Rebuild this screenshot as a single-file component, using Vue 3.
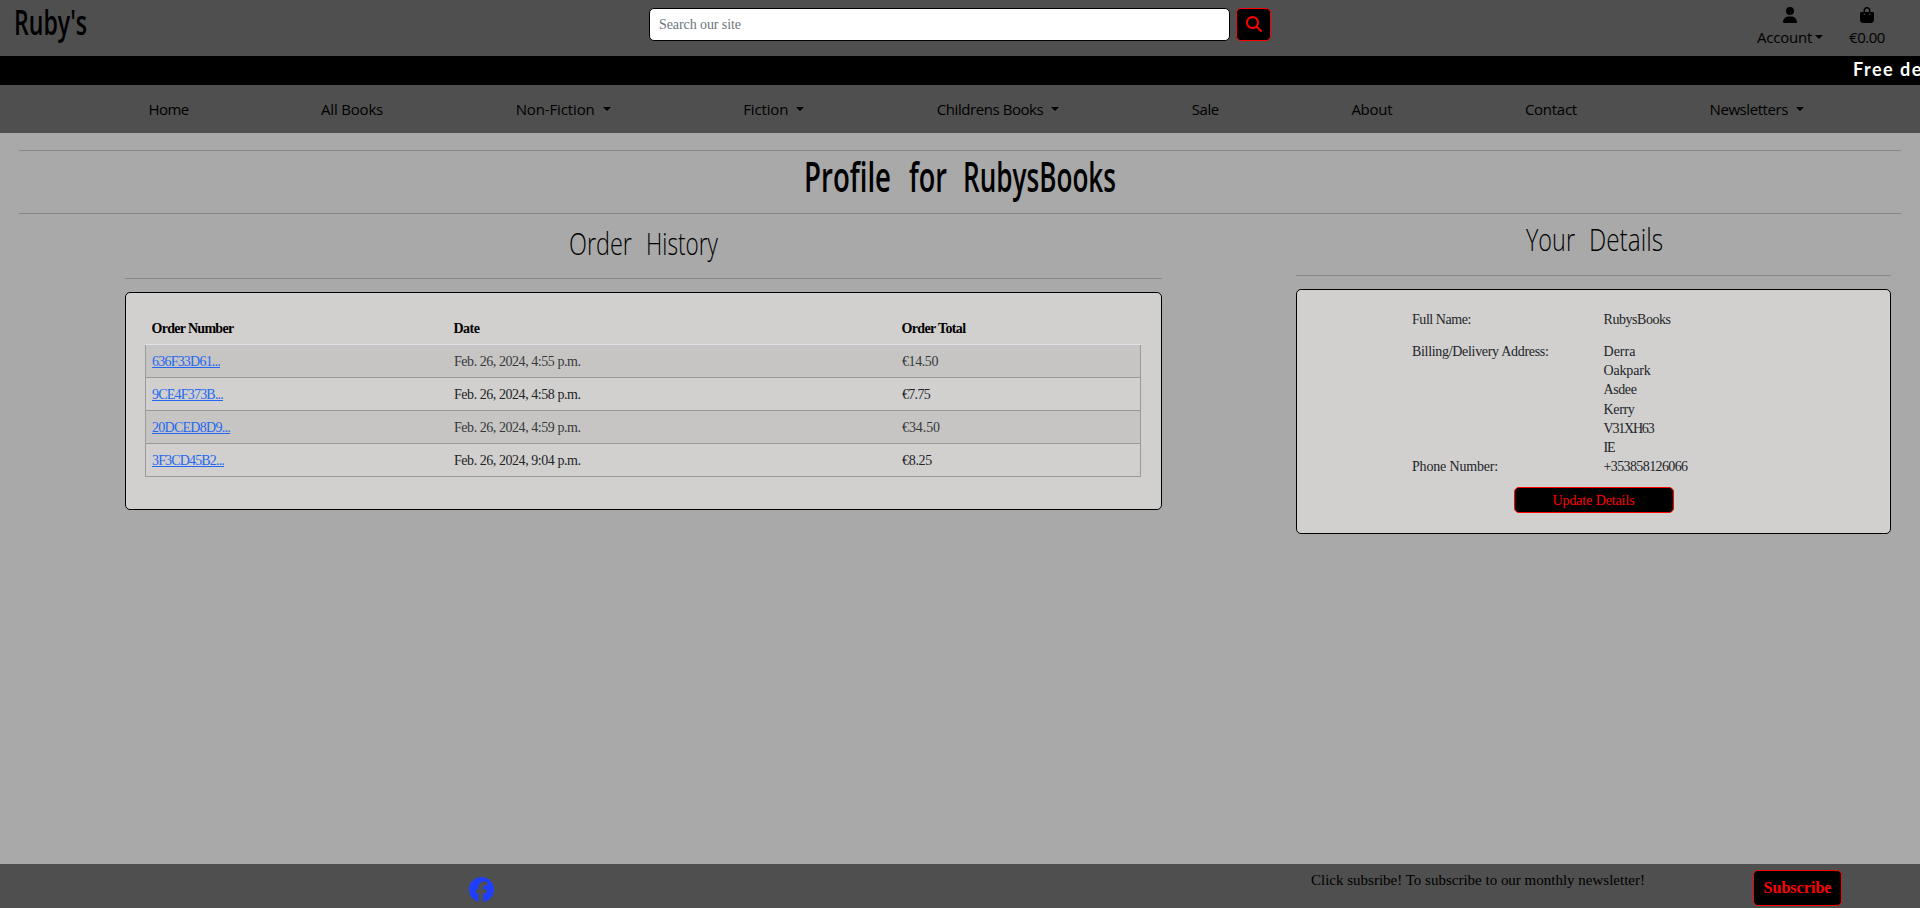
<script setup>
const navItems = [
  { label: 'Home', width: 40 },
  { label: 'All Books', width: 62 },
  { label: 'Non-Fiction', width: 79, menu: true },
  { label: 'Fiction', width: 45, menu: true },
  { label: 'Childrens Books', width: 106.5, menu: true },
  { label: 'Sale', width: 27 },
  { label: 'About', width: 41 },
  { label: 'Contact', width: 52 },
  { label: 'Newsletters', width: 78.5, menu: true },
]

const orders = [
  { number: '636F33D61...', width: 68, date: 'Feb. 26, 2024, 4:55 p.m.', total: '€14.50', totalWidth: 36 },
  { number: '9CE4F373B...', width: 71, date: 'Feb. 26, 2024, 4:58 p.m.', total: '€7.75', totalWidth: 28 },
  { number: '20DCED8D9...', width: 78, date: 'Feb. 26, 2024, 4:59 p.m.', total: '€34.50', totalWidth: 38 },
  { number: '3F3CD45B2...', width: 72, date: 'Feb. 26, 2024, 9:04 p.m.', total: '€8.25', totalWidth: 30 },
]

const address = [
  { text: 'Derra', width: 32 },
  { text: 'Oakpark', width: 47 },
  { text: 'Asdee', width: 33 },
  { text: 'Kerry', width: 31 },
  { text: 'V31XH63', width: 50 },
  { text: 'IE', width: 11 },
]

// Tracks the letters of a label so that it takes up the given width.
const vFit = {
  mounted(el, { value }) {
    const natural = el.getBoundingClientRect().width
    el.style.letterSpacing = `${(value - natural) / el.textContent.length}px`
  },
}
</script>

<template>
  <div class="page">
    <header class="top">
      <a class="logo">
        <svg width="90" height="56">
          <text class="logo-text" x="14" y="35" textLength="73" lengthAdjust="spacingAndGlyphs">Ruby's</text>
        </svg>
      </a>
      <form class="search" @submit.prevent>
        <div class="search-input"><span v-fit="82">Search our site</span></div>
        <button class="search-btn" type="submit" aria-label="Search">
          <svg width="16" height="16" viewBox="0 0 512 512">
            <path fill="currentColor" d="M416 208c0 45.900-14.900 88.300-40 122.700L502.600 457.400c12.500 12.500 12.500 32.800 0 45.300s-32.800 12.500-45.300 0L330.700 376c-34.400 25.200-76.800 40-122.700 40C93.100 416 0 322.900 0 208S93.100 0 208 0S416 93.100 416 208zM208 352a144 144 0 1 0 0-288 144 144 0 1 0 0 288z" />
          </svg>
        </button>
      </form>
      <div class="tools">
        <a class="tool account">
          <svg width="14" height="16" viewBox="0 0 448 512">
            <path d="M224 256A128 128 0 1 0 224 0a128 128 0 1 0 0 256zm-45.700 48C79.800 304 0 383.800 0 482.300C0 498.700 13.300 512 29.700 512H418.300c16.400 0 29.700-13.300 29.700-29.700C448 383.800 368.200 304 269.700 304H178.300z" />
          </svg>
          <span class="tool-label"><span v-fit="55">Account</span><i class="caret"></i></span>
        </a>
        <a class="tool">
          <svg width="14" height="16" viewBox="0 0 448 512">
            <path d="M160 112c0-35.300 28.700-64 64-64s64 28.700 64 64v48H160V112zm-48 48H48c-26.500 0-48 21.500-48 48V416c0 53 43 96 96 96H352c53 0 96-43 96-96V208c0-26.500-21.500-48-48-48H336V112C336 50.100 285.900 0 224 0S112 50.100 112 112v48zm24 48a24 24 0 1 1 0 48 24 24 0 1 1 0-48zm152 24a24 24 0 1 1 48 0 24 24 0 1 1-48 0z" />
          </svg>
          <span class="tool-label"><span v-fit="36">€0.00</span></span>
        </a>
      </div>
    </header>

    <div class="banner"><span v-fit="70">Free de</span></div>

    <nav class="nav">
      <a v-for="item in navItems" :key="item.label" class="nav-item">
        <span v-fit="item.width">{{ item.label }}</span>
        <i v-if="item.menu" class="caret"></i>
      </a>
    </nav>

    <main class="content">
      <h1 class="title">
        <svg class="title-text" width="314" height="62">
          <text x="1" y="41" textLength="87" lengthAdjust="spacingAndGlyphs">Profile</text>
          <text x="106" y="41" textLength="38" lengthAdjust="spacingAndGlyphs">for</text>
          <text x="160" y="41" textLength="153" lengthAdjust="spacingAndGlyphs">RubysBooks</text>
        </svg>
      </h1>

      <div class="columns">
        <section class="history">
          <h2>
            <svg class="sub-text" width="150" height="64">
              <text x="0" y="41" textLength="63" lengthAdjust="spacingAndGlyphs">Order</text>
              <text x="77" y="41" textLength="72" lengthAdjust="spacingAndGlyphs">History</text>
            </svg>
          </h2>
          <div class="panel history-panel">
            <div class="row head">
              <b><span v-fit="82">Order Number</span></b>
              <b><span v-fit="26">Date</span></b>
              <b><span v-fit="64">Order Total</span></b>
            </div>
            <div class="rows">
              <div v-for="order in orders" :key="order.number" class="row order">
                <div><a v-fit="order.width" class="link">{{ order.number }}</a></div>
                <div><span v-fit="126.500">{{ order.date }}</span></div>
                <div><span v-fit="order.totalWidth">{{ order.total }}</span></div>
              </div>
            </div>
          </div>
        </section>

        <section class="details">
          <h2>
            <svg class="sub-text" width="138" height="61">
              <text x="1" y="37" textLength="49" lengthAdjust="spacingAndGlyphs">Your</text>
              <text x="64" y="37" textLength="74" lengthAdjust="spacingAndGlyphs">Details</text>
            </svg>
          </h2>
          <div class="panel details-panel">
            <div class="facts">
              <div class="name"><span v-fit="59">Full Name:</span></div>
              <div class="name"><span v-fit="67">RubysBooks</span></div>
              <div><span v-fit="136.500">Billing/Delivery Address:</span></div>
              <div>
                <div v-for="line in address" :key="line.text"><span v-fit="line.width">{{ line.text }}</span></div>
              </div>
              <div><span v-fit="86">Phone Number:</span></div>
              <div><span v-fit="84">+353858126066</span></div>
            </div>
            <button class="update"><span v-fit="82">Update Details</span></button>
          </div>
        </section>
      </div>
    </main>

    <footer class="footer">
      <a class="facebook" aria-label="Facebook">
        <svg width="25" height="25" viewBox="0 0 512 512">
          <path d="M512 256C512 114.600 397.400 0 256 0S0 114.600 0 256C0 376 82.700 476.800 194.200 504.500V334.200H141.400V256h52.800V222.300c0-87.100 39.400-127.500 125-127.500c16.200 0 44.200 3.200 55.700 6.400V172c-6-.6-16.500-1-29.600-1c-42 0-58.200 15.900-58.200 57.200V256h83.600l-14.400 78.200H287V510.100C413.800 494.800 512 386.900 512 256z" />
        </svg>
      </a>
      <p class="note"><span v-fit="334">Click subsribe! To subscribe to our monthly newsletter!</span></p>
      <button class="subscribe"><span v-fit="68">Subscribe</span></button>
    </footer>
  </div>
</template>

<style>
html,
body {
  margin: 0;
  background: #a9a9a9;
}
</style>

<style scoped>
.page {
  display: flex;
  flex-direction: column;
  height: 908px;
  overflow: hidden;
  box-sizing: border-box;
  color: #000;
  background: #a9a9a9;
  font: 14px/19.2px "Liberation Serif", serif;
}
.page * {
  box-sizing: border-box;
}
span,
.link {
  white-space: nowrap;
}
h1,
h2,
p {
  margin: 0;
}
svg {
  display: block;
  overflow: visible;
}
button {
  padding: 0;
  color: #f00;
  background: #000;
  border: 1px solid #f00;
  border-radius: 5px;
  font-family: "Liberation Serif", serif;
}
.caret {
  border-top: 4.500px solid #000;
  border-left: 4.500px solid transparent;
  border-right: 4.500px solid transparent;
}

.top {
  display: grid;
  grid-template-columns: 649px 622px 1fr;
  height: 56px;
  flex: none;
  background: #4f4f4f;
}
.logo-text {
  font: 600 35px "Open Sans", sans-serif;
}
.search {
  display: flex;
  gap: 6px;
  padding-top: 8px;
}
.search-input {
  width: 581px;
  height: 33px;
  padding: 6px 9px;
  color: #6c757d;
  background: #fff;
  border: 1px solid #000;
  border-radius: 5px;
}
.search-btn {
  display: flex;
  align-items: flex-start;
  justify-content: center;
  width: 35px;
  height: 33px;
  padding-top: 7px;
}
.tools {
  display: flex;
  justify-content: flex-end;
  gap: 26px;
  padding: 7px 35px 0 0;
  font: 15px/24px "Open Sans", sans-serif;
}
.tool {
  display: flex;
  flex-direction: column;
  align-items: center;
}
.tool-label {
  display: flex;
  align-items: center;
  gap: 3px;
  margin-top: 2px;
}

.banner {
  height: 29px;
  flex: none;
  padding-left: 1853px;
  overflow: hidden;
  color: #fff;
  background: #000;
  font: 700 18px/26px Lato, sans-serif;
}

.nav {
  display: flex;
  justify-content: space-between;
  height: 48px;
  flex: none;
  padding: 12px 116px 12px 148.500px;
  background: #4f4f4f;
  font: 15px/24px "Open Sans", sans-serif;
}
.nav-item {
  display: flex;
  align-items: center;
  gap: 8px;
}

.content {
  flex: 1;
  padding-top: 17px;
}
.title {
  display: flex;
  justify-content: center;
  margin: 0 19px;
  border-top: 1px solid #878787;
  border-bottom: 1px solid #878787;
}
.title-text {
  font: 600 42px "Open Sans", sans-serif;
}
.columns {
  display: flex;
  align-items: flex-start;
  gap: 134px;
  padding-left: 125px;
}
.history {
  width: 1037px;
}
.details {
  width: 595px;
}
h2 {
  display: flex;
  justify-content: center;
  margin-bottom: 13px;
  border-bottom: 1px solid #878787;
}
.sub-text {
  font: 300 31px "Open Sans", sans-serif;
}
.panel {
  background: #d2d0ce;
  border: 1px solid #000;
  border-radius: 5px;
}
.history-panel {
  height: 218px;
  padding: 19px 20px 0 19px;
}
.row {
  display: grid;
  grid-template-columns: 302px 448px 1fr;
}
.head {
  height: 33px;
  padding: 7px 0 0 6.500px;
  border-bottom: 1px solid #dee2e6;
}
.rows {
  border: solid #999;
  border-width: 0 1px;
}
.order {
  height: 33px;
  padding: 7px 0 0 6px;
  color: #212529;
  border-bottom: 1px solid #999;
}
.order:nth-child(odd) {
  background: #c7c5c3;
  color: #36393c;
}
.link {
  color: #2468f2;
  text-decoration: underline;
}
.details-panel {
  height: 245px;
}
.facts {
  display: grid;
  grid-template-columns: 191.500px 1fr;
  padding: 20px 0 0 115px;
  color: #212529;
}
.name {
  margin-bottom: 12.800px;
}
.update {
  display: block;
  width: 160px;
  height: 26px;
  margin: 11px auto 0;
  padding-top: 1px;
  font-size: 14px;
}

.footer {
  display: grid;
  grid-template-columns: 842px 442px 89px;
  height: 44px;
  flex: none;
  padding-left: 469px;
  background: #4f4f4f;
}
.facebook {
  padding-top: 13px;
  fill: #1f3fff;
}
.note {
  padding-top: 6px;
  font-size: 15px;
  line-height: 21px;
}
.subscribe {
  width: 89px;
  height: 36px;
  margin-top: 6px;
  font-size: 16px;
  font-weight: 700;
}
</style>
